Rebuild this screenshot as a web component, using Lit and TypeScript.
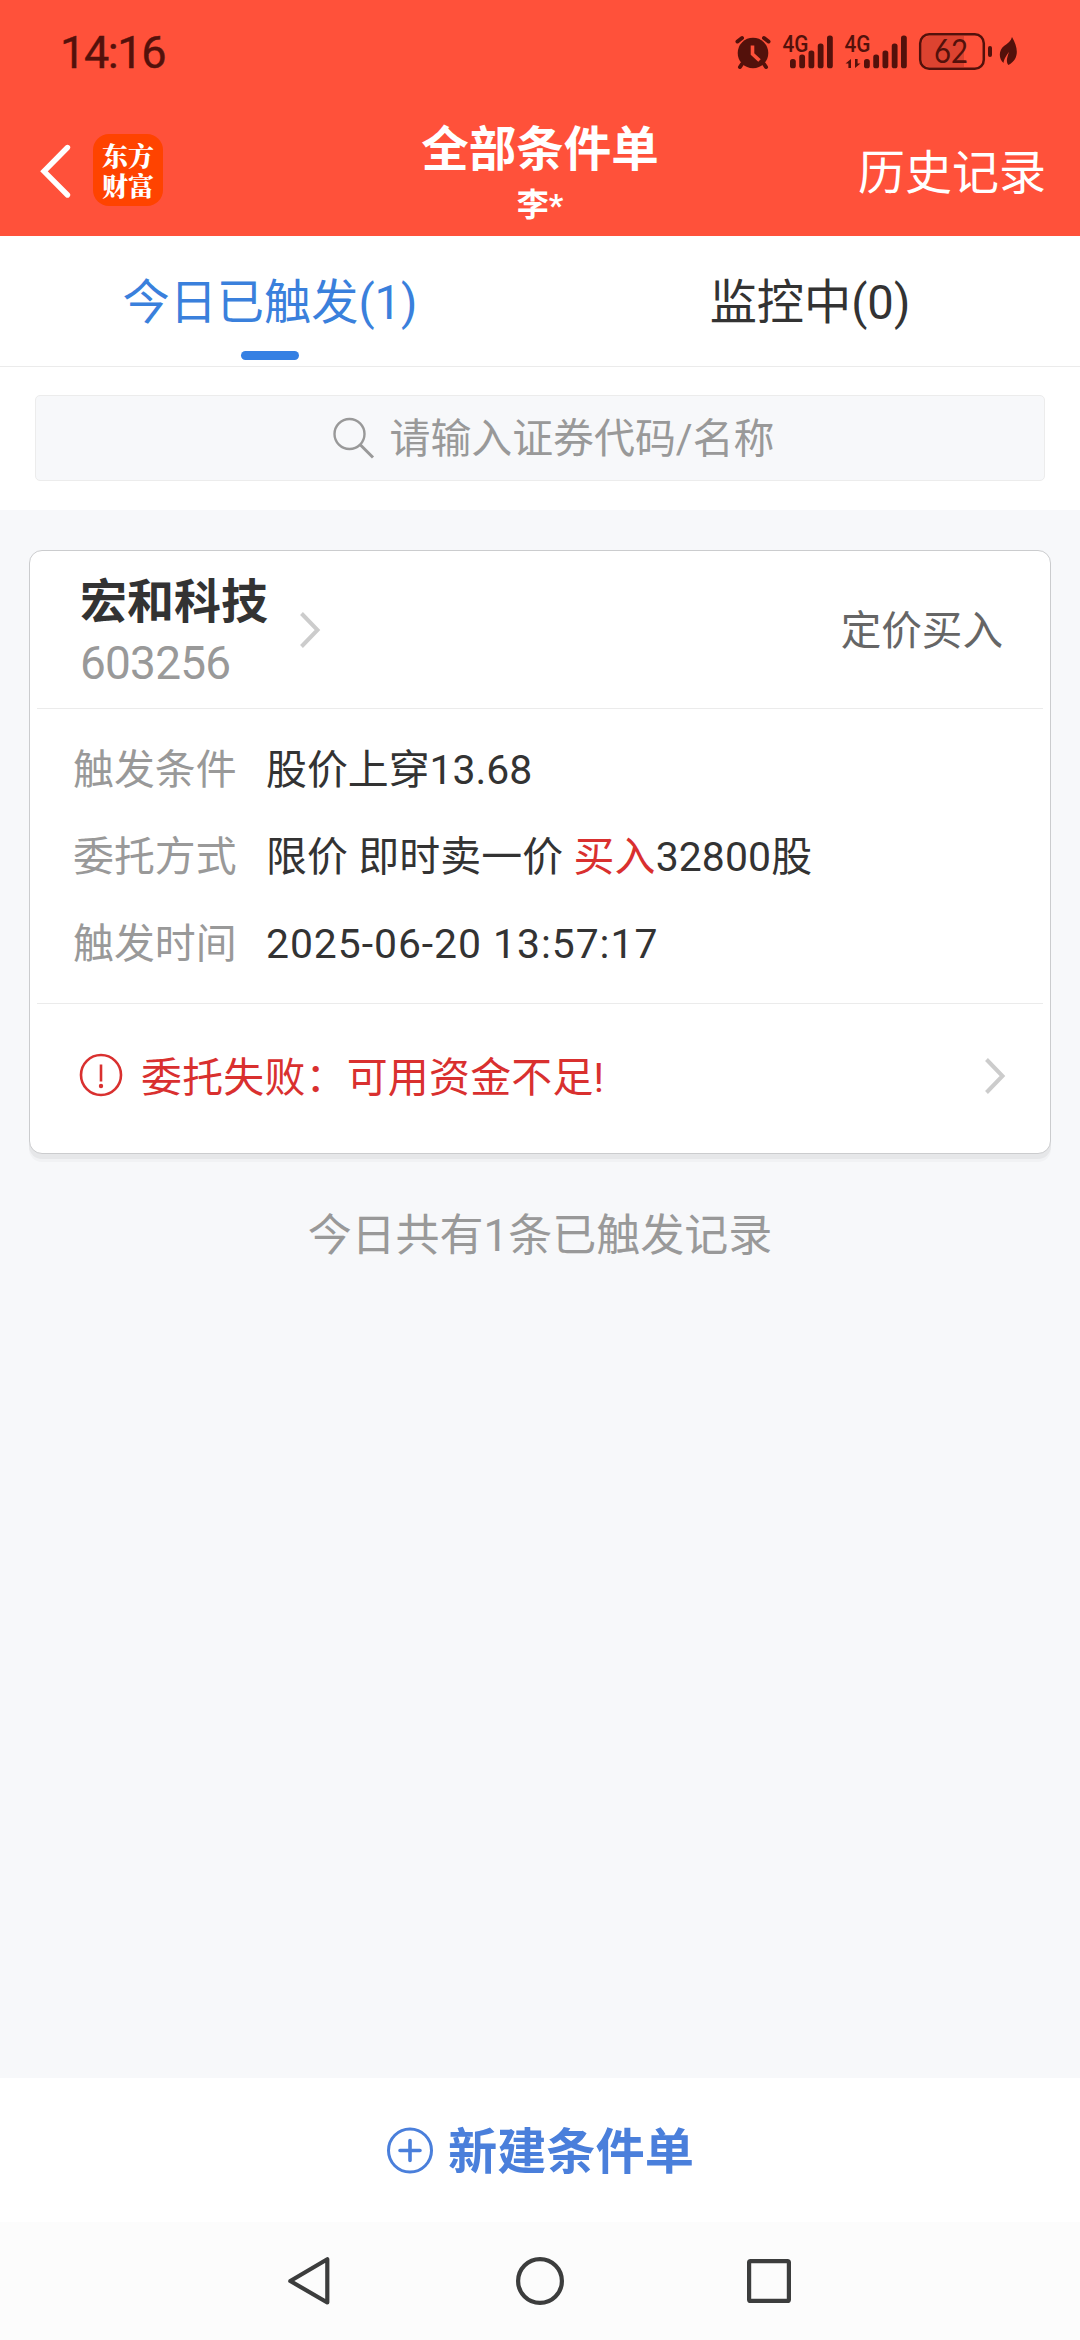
import { LitElement, html, css, svg } from "lit";
import { customElement, property } from "lit/decorators.js";

const FONT = css`Roboto, "Noto Sans CJK SC", sans-serif`;

@customElement("status-bar")
class StatusBar extends LitElement {
  static styles = css`
    :host { display: flex; justify-content: space-between; height: 104px; color: #53110b; font-family: ${FONT}; }
    .time { margin: 29px 0 0 60px; font-size: 45px; line-height: 48px; letter-spacing: -1.4px; -webkit-text-stroke: 0.4px #53110b; }
    .icons { display: block; margin-right: 60px; width: 285px; height: 104px; }
    .gen { font: 500 24px Roboto, sans-serif; }
    .level { font: 400 33px Lato, Roboto, sans-serif; }
  `;

  private bars(x: number) {
    return [59, 54.5, 50.5, 43.5, 35.5].map(
      (y, i) => svg`<rect x=${x + i * 9.25} y=${y} width="5.8" height=${68.3 - y} rx="2.6"/>`
    );
  }

  render() {
    return html`
      <div class="time">14:16</div>
      <svg class="icons" viewBox="735 0 285 104" fill="#53110b">
        <circle cx="753" cy="53" r="15.3"/>
        <path d="M742 64l-2 3M764 64l2 3" stroke="#53110b" stroke-width="4" stroke-linecap="round"/>
        <path d="M737.500 41.500l4.500-3.500M768.500 41.500l-4.500-3.500" stroke="#53110b" stroke-width="4" stroke-linecap="round"/>
        <path d="M752.500 45.500v8.500l7 6.500" fill="none" stroke="#ff513a" stroke-width="3.600"/>
        <text class="gen" x="782.500" y="52" textLength="26" lengthAdjust="spacingAndGlyphs">4G</text>
        ${this.bars(790)}
        <text class="gen" x="844.500" y="52" textLength="26" lengthAdjust="spacingAndGlyphs">4G</text>
        <path d="M845.500 63.500l5.500-4.500v9h-2.600v-4.500zM860.500 63.500l-5.500 4.500v-9h2.600v4.500z"/>
        ${this.bars(864)}
        <path d="M929 36h35v31h-35q-7 0-7-7v-17q0-7 7-7z" opacity=".2"/>
        <rect x="920.200" y="34.200" width="63.600" height="34.600" rx="9" fill="none" stroke="#53110b" stroke-width="2.500"/>
        <rect x="988" y="46" width="4" height="11" rx="2"/>
        <text class="level" x="934" y="63" textLength="34" lengthAdjust="spacingAndGlyphs">62</text>
        <path d="M1012 37C1018 47 1020 59 1008.500 65C1006.500 63 1006 60 1009 52C1005 57 1004 60 1003.500 63C998.500 59 998.500 50 1004 46C1008 43 1011 41 1012 37z"/>
      </svg>
    `;
  }
}

@customElement("nav-header")
class NavHeader extends LitElement {
  static styles = css`
    :host { display: grid; grid-template-columns: 1fr auto 1fr; height: 132px; color: #fff; font-family: ${FONT}; }
    .left { display: flex; align-items: flex-start; padding: 30px 0 0 38px; gap: 20px; }
    .back { width: 35px; height: 72px; }
    .logo { box-sizing: border-box; width: 70px; height: 72px; padding: 6px 8px 0 9px; border-radius: 16px; background: #ff4300; word-break: break-all;
      font: 900 26px/30px "Noto Serif CJK SC", "Noto Sans CJK SC", sans-serif; }
    .middle { display: flex; flex-direction: column; align-items: center; font-weight: 700; }
    .title { margin-top: 18px; font-size: 47.500px; line-height: 56px; }
    .sub { margin-top: 7px; font-size: 32px; line-height: 40px; }
    .history { justify-self: end; margin: 41px 34px 0 0; font-size: 47px; line-height: 56px; }
  `;
  render() {
    return html`
      <div class="left">
        <svg class="back" viewBox="0 0 35 72"><path d="M29.500 13.500L6 37.300L29.500 61" fill="none" stroke="#fff" stroke-width="5.400" stroke-linecap="round"/></svg>
        <div class="logo">东方财富</div>
      </div>
      <div class="middle"><div class="title">全部条件单</div><div class="sub">李*</div></div>
      <div class="history">历史记录</div>
    `;
  }
}

@customElement("order-tabs")
class OrderTabs extends LitElement {
  static styles = css`
    :host { display: grid; grid-template-columns: 1fr 1fr; box-sizing: border-box; height: 131px; background: #fff; border-bottom: 1px solid #ebebeb; font-family: ${FONT}; }
    .tab { display: flex; flex-direction: column; align-items: center; padding-top: 39px; font-size: 47.200px; line-height: 56px; color: #333; }
    .tab.active { color: #3a80dc; }
    .mark { width: 58px; height: 9px; margin-top: 20px; border-radius: 4.500px; background: #3580e3; }
  `;
  render() {
    return html`
      <div class="tab active"><span>今日已触发(1)</span><div class="mark"></div></div>
      <div class="tab"><span>监控中(0)</span></div>
    `;
  }
}

@customElement("search-bar")
class SearchBar extends LitElement {
  static styles = css`
    :host { display: block; box-sizing: border-box; height: 143px; padding: 28px 35px 0; background: #fff; font-family: ${FONT}; }
    .box { display: flex; box-sizing: border-box; height: 86px; border: 1px solid #ececec; border-radius: 5px; background: #f7f8fa; justify-content: center; align-items: center; gap: 15px; padding-left: 27px; }
    .glass { width: 42px; height: 42px; }
    .hint { padding-top: 2px; font-size: 40.900px; line-height: 48px; color: #999; }
  `;
  render() {
    return html`<div class="box">
      <svg class="glass" viewBox="0 0 42 42" fill="none" stroke="#999" stroke-width="2.400"><circle cx="16.500" cy="17" r="15"/><path d="M27 27.500L40 40.500" stroke-width="3"/></svg>
      <span class="hint">请输入证券代码/名称</span>
    </div>`;
  }
}

@customElement("order-card")
class OrderCard extends LitElement {
  @property() name = "";
  @property() code = "";
  @property() kind = "";
  static styles = css`
    :host { display: block; box-sizing: border-box; height: 604px; border: 1px solid #cbccce; border-radius: 13px; background: #fff; box-shadow: 0 5px 0 #e6e7e9, 0 8px 0 #f1f2f4; padding: 0 7px; color: #333; font-family: ${FONT}; }
    .head { display: flex; box-sizing: border-box; height: 158px; border-bottom: 1px solid #ebebeb; padding-left: 43px; }
    .name { margin-top: 23px; font-size: 47px; line-height: 56px; font-weight: 700; }
    .code { margin-top: 7px; font-size: 46px; line-height: 52px; letter-spacing: -0.800px; color: #999; }
    .arrow { width: 24px; height: 40px; fill: none; stroke: #ccc; stroke-width: 4; }
    .head .arrow { margin: 59px 0 0 31px; }
    .kind { margin: 56px 40px 0 auto; font-size: 40.600px; line-height: 48px; color: #666; }
    .body { display: grid; grid-template-columns: 193px 1fr; grid-auto-rows: 87px; box-sizing: border-box; height: 295px; padding: 18px 0 0 36px; border-bottom: 1px solid #ebebeb; font-size: 40.900px; line-height: 87px; }
    .label { color: #999; }
    .buy { color: #d9302f; }
    .method { letter-spacing: 0.120px; }
    .stamp { letter-spacing: 0.950px; }
    .alert { display: flex; padding: 49px 35px 0 42px; color: #d9302f; font-size: 40.900px; line-height: 48px; }
    .warn { width: 44px; height: 44px; margin-right: 18px; }
    .reason { padding-top: 1px; letter-spacing: 0.250px; }
    .alert .arrow { margin: 3px 0 0 auto; }
  `;
  private arrow() {
    return html`<svg class="arrow" viewBox="0 0 24 40"><path d="M2.500 3.500L18.500 20L2.500 36.500"/></svg>`;
  }
  render() {
    return html`
      <div class="head">
        <div><div class="name">${this.name}</div><div class="code">${this.code}</div></div>
        ${this.arrow()}
        <div class="kind">${this.kind}</div>
      </div>
      <div class="body">
        <span class="label">触发条件</span><span>股价上穿13.68</span>
        <span class="label">委托方式</span><span class="method">限价 即时卖一价 <span class="buy">买入</span>32800股</span>
        <span class="label">触发时间</span><span class="stamp">2025-06-20 13:57:17</span>
      </div>
      <div class="alert">
        <svg class="warn" viewBox="0 0 44 44" fill="none" stroke="#d9302f" stroke-width="2.600"><circle cx="22" cy="22" r="20"/><path d="M22 11.500v17"/><circle cx="22" cy="33" r="2.200" fill="#d9302f" stroke="none"/></svg>
        <span class="reason">委托失败：可用资金不足!</span>
        ${this.arrow()}
      </div>
    `;
  }
}

@customElement("app-root")
class AppRoot extends LitElement {
  static styles = css`
    :host { display: flex; flex-direction: column; width: 1080px; height: 2340px; overflow: hidden; background: #f7f8fa; font-family: ${FONT}; }
    .top { background: #ff513a; }
    .list { flex: 1; padding: 40px 29px 0; }
    .summary { margin-top: 54px; text-align: center; font-size: 44px; line-height: 56px; color: #999; }
    .create { display: flex; box-sizing: border-box; height: 144px; padding: 48px 0 0 386px; gap: 14px; background: #fff; color: #4a7fdb; font-size: 49.200px; line-height: 52px; font-weight: 700; }
    .plus { width: 48px; height: 48px; margin-top: 1px; }
    .system { display: block; width: 1080px; height: 118px; background: #fcfcfc; }
  `;
  render() {
    return html`
      <div class="top"><status-bar></status-bar><nav-header></nav-header></div>
      <order-tabs></order-tabs>
      <search-bar></search-bar>
      <main class="list">
        <order-card name="宏和科技" code="603256" kind="定价买入"></order-card>
        <div class="summary">今日共有1条已触发记录</div>
      </main>
      <div class="create">
        <svg class="plus" viewBox="0 0 48 48" fill="none" stroke="#4a7fdb" stroke-width="3"><circle cx="24" cy="23.500" r="21.500"/><path d="M24 13.500v20M14 23.500h20" stroke-width="3.600" stroke-linecap="round"/></svg>
        <span>新建条件单</span>
      </div>
      <svg class="system" viewBox="0 2222 1080 118" fill="none" stroke="#3c3d3d" stroke-width="4.200" stroke-linejoin="round">
        <path d="M327.300 2259.300V2302.500L290.300 2281z"/>
        <circle cx="540" cy="2281" r="21.900"/>
        <rect x="749.100" y="2261.100" width="39.800" height="39.800" rx="1.500"/>
      </svg>
    `;
  }
}
